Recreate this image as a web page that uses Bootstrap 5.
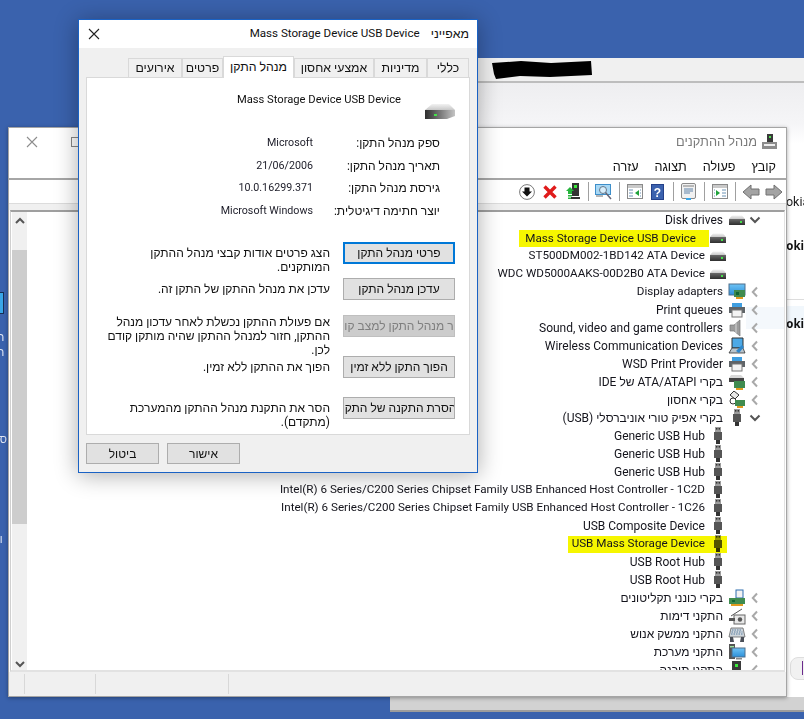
<!DOCTYPE html>
<html lang="he" dir="rtl">
<head>
<meta charset="utf-8">
<title>Device Manager</title>
<link href="https://cdn.jsdelivr.net/npm/bootstrap@5.3.0/dist/css/bootstrap.min.css" rel="stylesheet">
<style>
html,body{margin:0;height:719px;overflow:hidden}
body{background:#3a62ad;font-family:Roboto,"Liberation Sans",sans-serif;font-size:12px;color:#111;position:relative}
.desk-txt{position:absolute;left:-3px;color:#dfe6f3;font-size:11px;direction:ltr;line-height:12px}
.desk-tile{position:absolute;left:0;top:292px;width:4px;height:22px;background:#39a6e8;border:1px solid #173055;border-left:0}
.backwin{position:absolute;left:390px;top:58px;right:0;height:654px;background:#f2f2f2;border-bottom:2px solid #9c9c9c}
.backbar{height:25px;background:#f0f0f0;border-bottom:2px solid #bdbdbd}
.blob{position:absolute;left:101px;top:2px}
.backstrip{position:absolute;left:0;right:0;top:639px;height:13px;background:#d2d2d2}
.sidepane{position:absolute;left:397px;top:83px;right:0;height:614px;background:linear-gradient(#eeeef0,#f5f5f7 40px,#fff 60px)}
.nokia{position:absolute;left:777px;font-size:12.5px;direction:ltr;line-height:16px;color:#222}
.nokia.fw{left:777px;font-size:11.5px;font-weight:700;font-family:"Open Sans",sans-serif;color:#111}
.sideline{position:absolute;left:787px;right:0;top:299px;height:1px;background:#ddd}
.sideglow{position:absolute;left:787px;right:0;top:306px;height:22px;background:#f1f7fc}
.sidehover{position:absolute;left:735px;right:0;top:95px;height:22px;background:#eef5fb;opacity:.65}
.pill{position:absolute;left:790px;top:657px;width:30px;height:23px;background:#f1f1f1;border:1px solid #dedede;border-radius:8px}
.pillbar{position:absolute;left:802px;top:661px;width:1px;height:14px;background:#6b2a8c}
.mainwin{position:absolute;left:8px;top:127px;width:779px;height:570px;background:#fff;border:1px solid #a5a5a5;box-shadow:0 1px 4px rgba(0,0,0,.35);display:flex;flex-direction:column}
.titlerow{height:28px;flex:none;align-items:center;padding:0 8px 0 0;color:#7a7a7a;font-size:12.8px}
.winctl{margin-right:auto;display:flex;align-items:center;gap:33px;padding-left:17px;direction:ltr}
.sqbox{width:8px;height:10px;border:1px solid #888;display:block}
.menurow{height:24px;flex:none;align-items:center;border-bottom:2px solid #a6a6a6;padding-right:10px;gap:16px;font-size:12.6px}
.menurow span{display:block}
.toolrow{height:23px;flex:none;align-items:center;padding-right:1px;background:#fff}
.tbtn{width:23px;height:23px;display:flex;align-items:center;justify-content:center;flex:none}
.tsep{width:8px;flex:none;display:flex;justify-content:center;height:19px}
.tsep i{display:block;width:1px;height:19px;background:#a0a0a0}
.greystrip{height:7px;flex:none;background:#f0f0f0;border-top:1px solid #dcdcdc}
.treearea{flex:1 1 auto;min-height:0;margin:0 1px;border-top:2px solid #9f9f9f;border-right:1px solid #e3e3e3;border-left:1px solid #cfcfcf;border-bottom:2px solid #e2e2e2;overflow:hidden;position:relative}
.treelist{flex:1 1 auto;overflow:hidden;margin-top:-1px;position:relative}
.trow{height:18px;display:flex;align-items:center;white-space:nowrap;padding-right:21px;font-size:12px;color:#14141c}
.trow.kid{padding-right:57px}
.chev{width:16px;flex:none;display:flex;justify-content:center}
.ticon{width:18px;height:18px;flex:none;margin:0 1px}
.kid .ticon{margin:0;width:18px}
.tlabel{margin-right:4px}
.trow .narrowtxt{font-size:11.65px}
.hlspan{background:#f6f600;padding:0 13px 0 6px;line-height:17px;height:17px}
.hlrow{background:#f6f600;display:flex;align-items:center;height:17px;padding-left:4px}
.hlrow .ticon{mix-blend-mode:multiply}
.vscroll{width:15px;flex:none;margin-left:1px;background:#f0f0f0;display:flex;flex-direction:column;align-items:center;position:relative}
.vup{height:38px;flex:none}
.vthumb{width:100%;height:274px;background:#cdcdcd;flex:none}
.vdown{margin-top:auto;height:14px;flex:none}
.statusrow{height:24px;flex:none;background:#f0f0f0;direction:ltr}
.statcell{border-right:1px solid #d8d8d8;height:20px;margin-top:2px;flex:none}
.dlg{position:absolute;left:78px;top:19px;width:400px;height:454px;background:#f0f0f0;border:1px solid #1a62c4;box-shadow:0 2px 22px rgba(0,0,0,.33);display:flex;flex-direction:column}
.dlghead{height:28px;background:#fff;flex:none;align-items:center;padding:0 8px;font-size:12.4px;color:#111}
.dlghead .dlgname{margin-right:11px;font-size:11.6px}
.dlgx{margin-right:auto;margin-left:1px;display:block}
.tabrow{flex:none;height:29px;padding:9px 8px 0 0;border:0;flex-wrap:nowrap;gap:0;align-items:flex-end}
.tabrow .nav-link{height:19px;padding:0;background:#f0f0f0;border:1px solid #d9d9d9;border-bottom:0;border-radius:0;color:#111;font-size:12.3px;display:flex;align-items:center;justify-content:center;margin:0}
.tabrow .nav-link.active{height:22px;background:#fff;color:#111;border-color:#d9d9d9;margin-bottom:-1px;position:relative;z-index:2}
.dlgpanel{flex:none;height:358px;margin:0 7px;background:#fff;border:1px solid #d9d9d9;position:relative;padding-top:13px}
.pnlhead{height:29px;padding-right:14px;align-items:flex-start}
.pnlhead .devname{margin-right:24px;font-size:11.2px;line-height:18px}
.bigdrive{margin-top:13px}
.infogrid{margin-top:12px;padding-right:29px}
.infoline{height:22.6px;align-items:center;font-size:12px}
.infolabel{width:127px;flex:none}
.infoval{color:#1c1c28;font-size:10.7px}
.actions{margin-top:20px;padding-right:14px}
.actline{display:flex;gap:13px}
.actline.h36{height:36px}.actline.h37{height:37px}.actline.h41{height:41px}
.wbtn{width:112px;height:22px;flex:none;padding:0;border-radius:0;background:#e1e1e1;border:1px solid #adadad;color:#111;font-size:12px;line-height:18px;white-space:nowrap;overflow:hidden;--bs-btn-hover-bg:#e1e1e1;display:flex;align-items:center;justify-content:center}
.wbtn.focus-b{border:2px solid #0078d7}
.wbtn.off,.wbtn.off:disabled{background:#ccc;border-color:#bfbfbf;color:#7f7f7f;opacity:1}
.actdesc{width:230px;line-height:14px;font-size:12px}
.dlgfoot{flex:1 1 auto;justify-content:flex-end;gap:8px;padding:8px 0 0 7px;align-items:flex-start}
.dlgfoot .wbtn{width:73px;height:21px}
</style>
</head>
<body>
<svg width="0" height="0" class="position-absolute">
<defs>
<linearGradient id="gt" x1="0" y1="0" x2="0" y2="1"><stop offset="0" stop-color="#f2f2f2"/><stop offset="1" stop-color="#c8c8c8"/></linearGradient>
<linearGradient id="gb" x1="0" y1="0" x2="0" y2="1"><stop offset="0" stop-color="#6a6a6a"/><stop offset="1" stop-color="#2e2e2e"/></linearGradient>
<linearGradient id="gh" x1="0" y1="0" x2="1" y2="0"><stop offset="0" stop-color="#2e2e2e"/><stop offset=".5" stop-color="#777"/><stop offset="1" stop-color="#c4c4c4"/></linearGradient>
<linearGradient id="gs" x1="0" y1="0" x2="0" y2="1"><stop offset="0" stop-color="#6ec3f5"/><stop offset="1" stop-color="#2c8fd8"/></linearGradient>
<symbol id="chl" viewBox="0 0 10 12"><path d="M7 1.500 2.800 6 7 10.500" fill="none" stroke="#a9a9a9" stroke-width="2"/></symbol>
<symbol id="chd" viewBox="0 0 12 8"><path d="M1.500 1.500 6 6l4.500-4.500" fill="none" stroke="#555" stroke-width="2"/></symbol>
<symbol id="drive" viewBox="0 0 18 18"><path d="M4 4.500h10l3 3.500H1z" fill="url(#gt)"/><rect x="1" y="8" width="16" height="6" fill="url(#gb)"/><rect x="12" y="10" width="2" height="2" fill="#45e04a"/></symbol>
<symbol id="usb" viewBox="0 0 18 18"><rect x="6" y="0" width="6" height="5" fill="#9c9c9c"/><rect x="7" y="1" width="1.400" height="1.600" fill="#333"/><rect x="9.600" y="1" width="1.400" height="1.600" fill="#333"/><rect x="5" y="5" width="8" height="8" fill="#555"/><rect x="7" y="13" width="4" height="4" fill="#333"/></symbol>
<symbol id="display" viewBox="0 0 18 18"><rect x="1" y="1" width="16" height="11" fill="url(#gs)" stroke="#4f6f8c"/><rect x="6" y="7" width="11" height="7" fill="#3f8b4f"/><rect x="8" y="14" width="7" height="2" fill="#e09a1f"/><rect x="8" y="9" width="3" height="3" fill="#163"/></symbol>
<symbol id="printer" viewBox="0 0 18 18"><rect x="4" y="2" width="10" height="4" fill="#3f9ee0"/><rect x="1" y="6" width="16" height="6" fill="#5f6468"/><rect x="4" y="9" width="10" height="7" fill="#f4f4f4" stroke="#777"/></symbol>
<symbol id="speaker" viewBox="0 0 18 18"><path d="M2 6h4l6-5v16l-6-5H2z" fill="#9d9d9d" stroke="#777" stroke-width=".7"/><path d="M8 4v10" stroke="#d8d8d8"/></symbol>
<symbol id="wifi" viewBox="0 0 18 18"><path d="M4 1h11v10H4z" fill="#4da9e6" stroke="#333"/><path d="M1 16l3-5h11l2 5z" fill="#b9c4cc" stroke="#333" stroke-width=".8"/><path d="M8 14l6-6 2 2-5 6z" fill="#2f86c9"/></symbol>
<symbol id="idec" viewBox="0 0 18 18"><path d="M3 2h10l3 3H1z" fill="#d8d8d8"/><rect x="1" y="5" width="15" height="4" fill="#444"/><rect x="6" y="8" width="11" height="7" fill="#3f8b4f"/><rect x="8" y="15" width="7" height="2" fill="#e09a1f"/></symbol>
<symbol id="stor" viewBox="0 0 18 18"><path d="M6 0l5 4-4 4-5-4z" fill="#e8e8e8" stroke="#333"/><circle cx="5" cy="10" r="3" fill="#fff" stroke="#333"/><rect x="7" y="9" width="10" height="6" fill="#3f8b4f"/><rect x="9" y="15" width="6" height="2" fill="#e09a1f"/></symbol>
<symbol id="fdd" viewBox="0 0 18 18"><rect x="8" y="1" width="7" height="8" fill="#f2f2f2" stroke="#2f6fb0"/><rect x="1" y="9" width="16" height="6" fill="#3f8b4f"/><rect x="3" y="15" width="12" height="2" fill="#e09a1f"/><rect x="4" y="11" width="3" height="2" fill="#163"/></symbol>
<symbol id="cam" viewBox="0 0 18 18"><path d="M3 9 14 2" stroke="#555"/><rect x="6" y="8" width="11" height="9" fill="#e8e8e8" stroke="#666"/><rect x="1" y="11" width="6" height="3" fill="#555"/><circle cx="12" cy="12.500" r="2.200" fill="#555"/></symbol>
<symbol id="hid" viewBox="0 0 18 18"><path d="M3 3h12l2 9H1z" fill="#cfd6dc" stroke="#666" stroke-width=".8"/><path d="M4 5h10M3.500 7h11M3 9h12" stroke="#5b7fa0" stroke-dasharray="1.500 1"/><path d="M2 17V12h3l1 5zM16 17V12h-3l-1 5z" fill="#4a4f58"/></symbol>
<symbol id="sys" viewBox="0 0 18 18"><rect x="1" y="1" width="6" height="15" fill="#555"/><rect x="2" y="3" width="4" height="1.500" fill="#9fe39f"/><rect x="4" y="5" width="13" height="9" fill="url(#gs)" stroke="#4f6f8c"/><rect x="8" y="15" width="6" height="1.500" fill="#888"/></symbol>
<symbol id="tower" viewBox="0 0 18 18"><rect x="4" y="0" width="9" height="17" fill="#3a3a3a"/><rect x="7" y="3" width="3" height="3" fill="#3bea3b"/></symbol>
</defs>
</svg>

<div class="desk-tile"></div>
<span class="desk-txt" style="top:332px">ח</span>
<span class="desk-txt" style="top:347px">ח</span>
<span class="desk-txt" style="top:434px">סו</span>
<span class="desk-txt" style="top:534px">וו</span>

<div class="backwin">
  <div class="backbar"></div>
  <svg class="blob" width="102" height="20" viewBox="0 0 102 20"><path d="M1 3 30 1l30 2 40-2 1 14-42 2-30-1-24 3L3 14z" fill="#000"/></svg>
  <div class="backstrip"></div>
</div>
<div class="sidepane"></div>
<span class="nokia" style="top:194px">Nokia</span>
<span class="nokia fw" style="top:238px">Nokia</span>
<div class="sideline"></div>
<div class="sideglow"></div>
<span class="nokia fw" style="top:316px">Nokia</span>
<div class="pill"></div><div class="pillbar"></div>

<div class="mainwin">
  <div class="d-flex titlerow">
    <svg width="17" height="18" viewBox="0 0 17 18" class="flex-none"><rect x="6" y="1" width="6" height="8" fill="#3a3a3a"/><rect x="8" y="3" width="2" height="2" fill="#4fe04f"/><rect x="1" y="9" width="15" height="7" fill="#8c8c8c"/><rect x="3" y="11" width="11" height="2" fill="#eee"/></svg>
    <span class="ms-0 me-1">מנהל ההתקנים</span>
    <div class="winctl">
      <svg width="12" height="12" viewBox="0 0 12 12"><path d="M1 1 11 11M11 1 1 11" stroke="#8d8d8d" stroke-width="1.100"/></svg>
      <span class="sqbox"></span>
    </div>
  </div>
  <div class="d-flex menurow">
    <span>קובץ</span><span>פעולה</span><span>תצוגה</span><span>עזרה</span>
  </div>
  <div class="d-flex toolrow">
    <div class="tbtn"><svg width="18" height="16" viewBox="0 0 18 16"><path d="M1 5h8V1l8 7-8 7v-4H1z" fill="#a3a3a3" stroke="#707070"/></svg></div>
    <div class="tbtn"><svg width="18" height="16" viewBox="0 0 18 16"><path d="M17 5H9V1L1 8l8 7v-4h8z" fill="#a3a3a3" stroke="#707070"/></svg></div>
    <div class="tsep"><i></i></div>
    <div class="tbtn"><svg width="16" height="15" viewBox="0 0 16 15"><rect x=".5" y=".5" width="15" height="14" fill="#fff" stroke="#8a8a8a"/><rect x="1" y="1" width="14" height="3" fill="#c9c9c9"/><path d="M4 6l4 3-4 3z" fill="#1fa23a"/><path d="M10 6h4M10 9h4M10 12h4M2 6h1M2 9h1M2 12h1" stroke="#6d93b5"/></svg></div>
    <div class="tsep"><i></i></div>
    <div class="tbtn"><svg width="15" height="17" viewBox="0 0 15 17"><rect x=".5" y=".5" width="14" height="15" rx="1.500" fill="#f1f1f1" stroke="#8a8a8a"/><rect x="2" y="2" width="11" height="2" fill="#b8b8b8"/><path d="M3 6h9M3 8h9M3 10h6" stroke="#5f82a8"/><rect x="5" y="15" width="5" height="2" fill="#39a6e8"/></svg></div>
    <div class="tsep"><i></i></div>
    <div class="tbtn"><svg width="13" height="16" viewBox="0 0 13 16"><rect width="13" height="16" fill="#3b62ae"/><rect x=".5" y=".5" width="12" height="15" fill="none" stroke="#24418a"/><text x="6.500" y="12.500" text-anchor="middle" font-size="12" font-weight="700" fill="#fff" font-family="Liberation Sans">?</text></svg></div>
    <div class="tbtn"><svg width="16" height="15" viewBox="0 0 16 15"><rect x=".5" y=".5" width="15" height="14" fill="#fff" stroke="#8a8a8a"/><rect x="1" y="1" width="14" height="3" fill="#c9c9c9"/><path d="M12 6l-4 3 4 3z" fill="#1fa23a"/><path d="M2 6h4M2 9h4M2 12h4M13 6h1M13 9h1M13 12h1" stroke="#6d93b5"/></svg></div>
    <div class="tsep"><i></i></div>
    <div class="tbtn"><svg width="17" height="16" viewBox="0 0 17 16"><rect x=".5" y=".5" width="15" height="10" fill="#a8d8f5" stroke="#3e8fca"/><circle cx="8" cy="6" r="3.500" fill="#d8eefb" stroke="#678"/><path d="M10.500 8.500 16 15" stroke="#667" stroke-width="1.500"/><path d="M1 12h7" stroke="#6d6d6d"/></svg></div>
    <div class="tsep"><i></i></div>
    <div class="tbtn"><svg width="16" height="17" viewBox="0 0 16 17"><rect x="7" y="0" width="7" height="13" fill="#333"/><rect x="9" y="2" width="3" height="3" fill="#3bea3b"/><path d="M1 8l4-4 4 4H7v3H3V8zM3 12h4v1.500H3zM3 14.500h4V16H3z" fill="#26b43c"/><rect x="6" y="14" width="9" height="2" fill="#333"/></svg></div>
    <div class="tbtn"><svg width="14" height="14" viewBox="0 0 14 14"><path d="M1.500 1.500l11 11M12.500 1.500l-11 11" stroke="#e01b1b" stroke-width="3.400"/></svg></div>
    <div class="tbtn"><svg width="16" height="16" viewBox="0 0 16 16"><circle cx="8" cy="8" r="7.400" fill="#fff" stroke="#7a7a7a"/><path d="M5.500 3.500h5v4h2.500L8 12.500 3 7.500h2.500z" fill="#111"/></svg></div>
  </div>
  <div class="greystrip"></div>
  <div class="d-flex treearea">
    <div class="sidehover"></div>
    <div class="treelist">
      <div class="trow"><span class="chev"><svg width="12" height="8"><use href="#chd"/></svg></span><svg class="ticon"><use href="#drive"/></svg><span class="tlabel">Disk drives</span></div>
      <div class="trow kid"><svg class="ticon"><use href="#drive"/></svg><span class="hlspan narrowtxt">Mass Storage Device USB Device</span></div>
      <div class="trow kid"><svg class="ticon"><use href="#drive"/></svg><span class="tlabel narrowtxt">ST500DM002-1BD142 ATA Device</span></div>
      <div class="trow kid"><svg class="ticon"><use href="#drive"/></svg><span class="tlabel narrowtxt">WDC WD5000AAKS-00D2B0 ATA Device</span></div>
      <div class="trow"><span class="chev"><svg width="10" height="12"><use href="#chl"/></svg></span><svg class="ticon"><use href="#display"/></svg><span class="tlabel narrowtxt">Display adapters</span></div>
      <div class="trow"><span class="chev"><svg width="10" height="12"><use href="#chl"/></svg></span><svg class="ticon"><use href="#printer"/></svg><span class="tlabel">Print queues</span></div>
      <div class="trow"><span class="chev"><svg width="10" height="12"><use href="#chl"/></svg></span><svg class="ticon"><use href="#speaker"/></svg><span class="tlabel">Sound, video and game controllers</span></div>
      <div class="trow"><span class="chev"><svg width="10" height="12"><use href="#chl"/></svg></span><svg class="ticon"><use href="#wifi"/></svg><span class="tlabel">Wireless Communication Devices</span></div>
      <div class="trow"><span class="chev"><svg width="10" height="12"><use href="#chl"/></svg></span><svg class="ticon"><use href="#printer"/></svg><span class="tlabel">WSD Print Provider</span></div>
      <div class="trow"><span class="chev"><svg width="10" height="12"><use href="#chl"/></svg></span><svg class="ticon"><use href="#idec"/></svg><span class="tlabel">בקרי ATA/ATAPI של IDE</span></div>
      <div class="trow"><span class="chev"><svg width="10" height="12"><use href="#chl"/></svg></span><svg class="ticon"><use href="#stor"/></svg><span class="tlabel">בקרי אחסון</span></div>
      <div class="trow"><span class="chev"><svg width="12" height="8"><use href="#chd"/></svg></span><svg class="ticon"><use href="#usb"/></svg><span class="tlabel">בקרי אפיק טורי אוניברסלי (USB)</span></div>
      <div class="trow kid"><svg class="ticon"><use href="#usb"/></svg><span class="tlabel">Generic USB Hub</span></div>
      <div class="trow kid"><svg class="ticon"><use href="#usb"/></svg><span class="tlabel">Generic USB Hub</span></div>
      <div class="trow kid"><svg class="ticon"><use href="#usb"/></svg><span class="tlabel">Generic USB Hub</span></div>
      <div class="trow kid"><svg class="ticon"><use href="#usb"/></svg><span class="tlabel narrowtxt">Intel(R) 6 Series/C200 Series Chipset Family USB Enhanced Host Controller - 1C2D</span></div>
      <div class="trow kid"><svg class="ticon"><use href="#usb"/></svg><span class="tlabel narrowtxt">Intel(R) 6 Series/C200 Series Chipset Family USB Enhanced Host Controller - 1C26</span></div>
      <div class="trow kid"><svg class="ticon"><use href="#usb"/></svg><span class="tlabel">USB Composite Device</span></div>
      <div class="trow kid"><span class="hlrow"><svg class="ticon"><use href="#usb"/></svg><span class="tlabel narrowtxt">USB Mass Storage Device</span></span></div>
      <div class="trow kid"><svg class="ticon"><use href="#usb"/></svg><span class="tlabel">USB Root Hub</span></div>
      <div class="trow kid"><svg class="ticon"><use href="#usb"/></svg><span class="tlabel">USB Root Hub</span></div>
      <div class="trow"><span class="chev"><svg width="10" height="12"><use href="#chl"/></svg></span><svg class="ticon"><use href="#fdd"/></svg><span class="tlabel">בקרי כונני תקליטונים</span></div>
      <div class="trow"><span class="chev"><svg width="10" height="12"><use href="#chl"/></svg></span><svg class="ticon"><use href="#cam"/></svg><span class="tlabel">התקני דימות</span></div>
      <div class="trow"><span class="chev"><svg width="10" height="12"><use href="#chl"/></svg></span><svg class="ticon"><use href="#hid"/></svg><span class="tlabel">התקני ממשק אנוש</span></div>
      <div class="trow"><span class="chev"><svg width="10" height="12"><use href="#chl"/></svg></span><svg class="ticon"><use href="#sys"/></svg><span class="tlabel">התקני מערכת</span></div>
      <div class="trow"><span class="chev"><svg width="10" height="12"><use href="#chl"/></svg></span><svg class="ticon"><use href="#tower"/></svg><span class="tlabel">התקני תוכנה</span></div>
    </div>
    <div class="vscroll">
      <svg class="vup" width="10" height="38" viewBox="0 0 10 38"><path d="M1 11 5 7l4 4" fill="none" stroke="#555" stroke-width="2"/></svg>
      <div class="vthumb"></div>
      <svg class="vdown" width="10" height="14" viewBox="0 0 10 14"><path d="M1 6 5 10 9 6" fill="none" stroke="#555" stroke-width="2"/></svg>
    </div>
  </div>
  <div class="d-flex statusrow">
    <div class="statcell" style="width:16px"></div>
    <div class="statcell" style="width:71px"></div>
    <div class="statcell" style="width:133px"></div>
  </div>
</div>

<div class="dlg">
  <div class="d-flex dlghead">
    <span>מאפייני</span>
    <span class="dlgname">Mass Storage Device USB Device</span>
    <svg class="dlgx" width="12" height="12" viewBox="0 0 12 12"><path d="M1 1 11 11M11 1 1 11" stroke="#222" stroke-width="1.100"/></svg>
  </div>
  <ul class="nav nav-tabs tabrow">
    <li class="nav-item"><a class="nav-link" style="width:42px">כללי</a></li>
    <li class="nav-item"><a class="nav-link" style="width:53px">מדיניות</a></li>
    <li class="nav-item"><a class="nav-link" style="width:80px">אמצעי אחסון</a></li>
    <li class="nav-item"><a class="nav-link active" style="width:71px">מנהל התקן</a></li>
    <li class="nav-item"><a class="nav-link" style="width:41px">פרטים</a></li>
    <li class="nav-item"><a class="nav-link" style="width:54px">אירועים</a></li>
  </ul>
  <div class="dlgpanel">
    <div class="d-flex pnlhead">
      <svg class="bigdrive" width="30" height="15" viewBox="0 0 30 15"><path d="M7 0h17l6 6H0z" fill="url(#gt)"/><path d="M0 6h30v6l-8 3H0z" fill="url(#gh)"/><rect x="9" y="10" width="3" height="2" fill="#45e04a"/></svg>
      <span class="devname">Mass Storage Device USB Device</span>
    </div>
    <div class="infogrid">
      <div class="d-flex infoline"><span class="infolabel">ספק מנהל התקן:</span><span class="infoval">Microsoft</span></div>
      <div class="d-flex infoline"><span class="infolabel">תאריך מנהל התקן:</span><span class="infoval">21/06/2006</span></div>
      <div class="d-flex infoline"><span class="infolabel">גירסת מנהל התקן:</span><span class="infoval">10.0.16299.371</span></div>
      <div class="d-flex infoline"><span class="infolabel">יוצר חתימה דיגיטלית:</span><span class="infoval">Microsoft Windows</span></div>
    </div>
    <div class="actions">
      <div class="actline h36"><button type="button" class="btn wbtn focus-b">פרטי מנהל התקן</button><div class="actdesc mt-1">הצג פרטים אודות קבצי מנהל ההתקן המותקנים.</div></div>
      <div class="actline h37"><button type="button" class="btn wbtn">עדכן מנהל התקן</button><div class="actdesc mt-1">עדכן את מנהל ההתקן של התקן זה.</div></div>
      <div class="actline h41"><button type="button" class="btn wbtn off" disabled>ר מנהל התקן למצב קו</button><div class="actdesc">אם פעולת ההתקן נכשלת לאחר עדכון מנהל ההתקן, חזור למנהל ההתקן שהיה מותקן קודם לכן.</div></div>
      <div class="actline h41"><button type="button" class="btn wbtn">הפוך התקן ללא זמין</button><div class="actdesc mt-1">הפוך את ההתקן ללא זמין.</div></div>
      <div class="actline h36"><button type="button" class="btn wbtn">הסרת התקנה של התקן</button><div class="actdesc mt-1">הסר את התקנת מנהל ההתקן מהמערכת (מתקדם).</div></div>
    </div>
  </div>
  <div class="d-flex dlgfoot">
    <button type="button" class="btn wbtn">אישור</button>
    <button type="button" class="btn wbtn">ביטול</button>
  </div>
</div>
<script src="https://cdn.jsdelivr.net/npm/bootstrap@5.3.0/dist/js/bootstrap.bundle.min.js"></script>
</body>
</html>
